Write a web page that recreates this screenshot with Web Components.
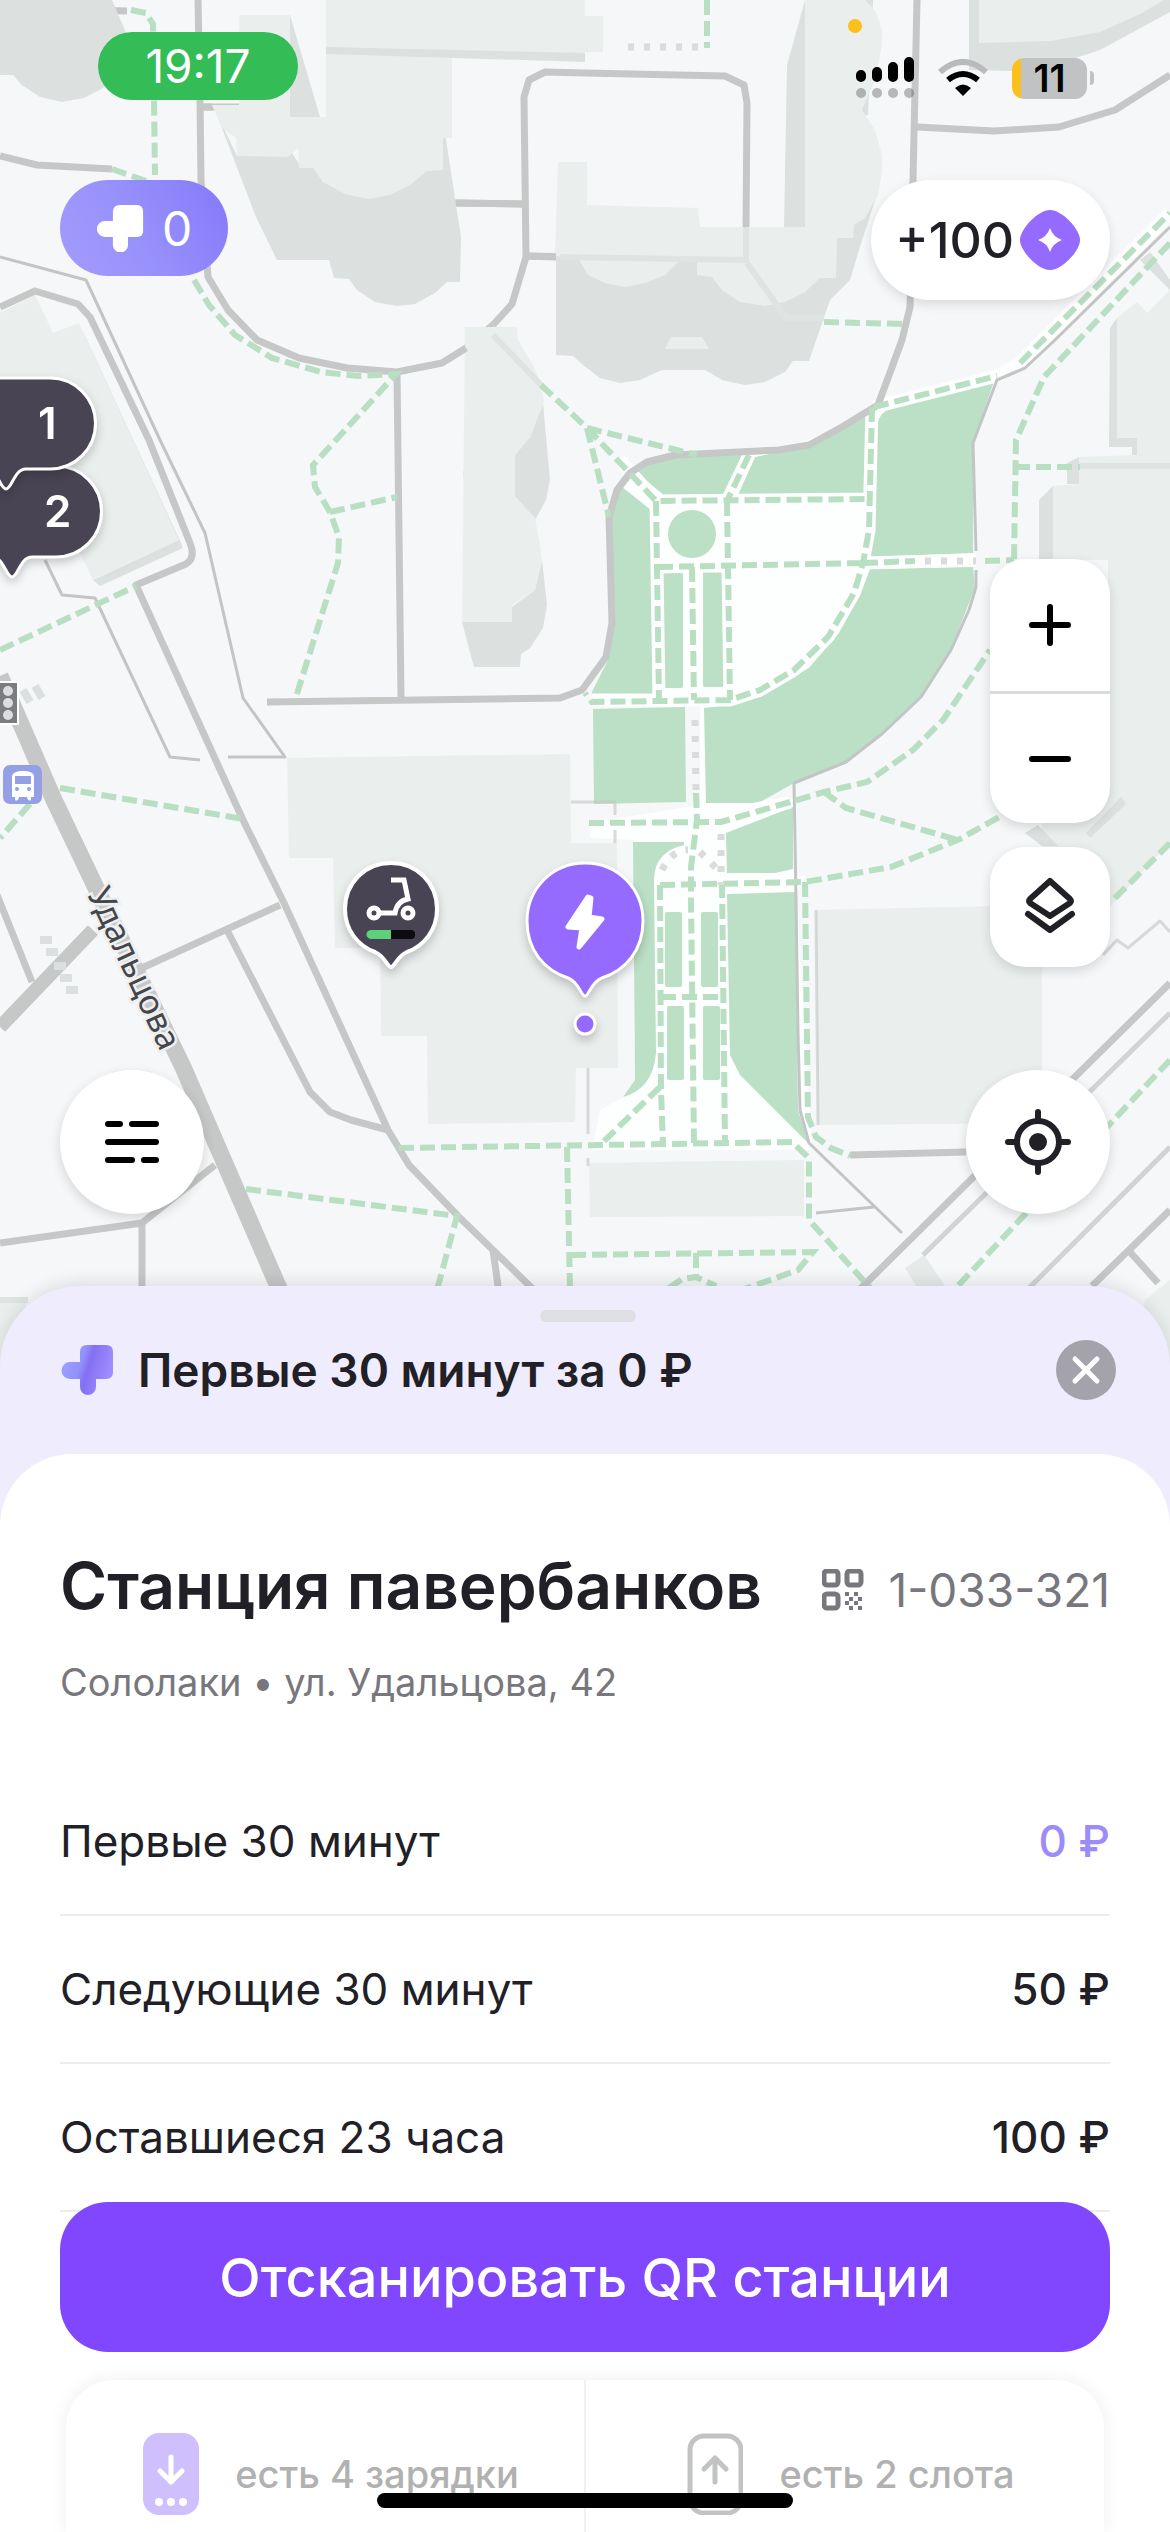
<!DOCTYPE html>
<html lang="ru">
<head>
<meta charset="utf-8">
<meta name="viewport" content="width=device-width">
<title>Станция павербанков</title>
<style>
    body {
        margin: 0;
        font-family: Inter, "Liberation Sans", sans-serif;
        color: #212027;
        background: #ffffff;
    }
</style>
</head>
<body>
<station-app></station-app>

<script>
//Every component goes through this: open shadow root + template
class BaseElement extends HTMLElement {
    render(html) {
        this.attachShadow({ mode: "open" });
        const template = document.createElement("template");
        template.innerHTML = html;
        this.shadowRoot.appendChild(template.content.cloneNode(true));
    }
}

//The drawn city map
class CityMap extends BaseElement {
    constructor() {
        super();
        this.render(`
            <style>
                :host { display: block; overflow: hidden; background: #f5f7f8; }
                svg { display: block; width: 100%; height: 100%; }
                .roof { fill: #eaefee; }
                .shade { fill: #dce1df; }
                .lawn { fill: #bbe0c5; }
                .road { fill: none; stroke: #c6c8c8; stroke-width: 7; stroke-linejoin: round; }
                .wide { stroke-width: 17; }
                .mid { stroke-width: 14; }
                .lane { fill: none; stroke: #d1d4d3; stroke-width: 5; }
                .fence { fill: none; stroke: #c3c5c5; stroke-width: 3; stroke-linejoin: round; }
                .faint { fill: none; stroke: #dfe3e2; stroke-width: 6; }
                .halo { fill: none; stroke: #fefefe; stroke-width: 13; }
                .path { fill: none; stroke: #b9dfc3; stroke-width: 6; stroke-dasharray: 15 6; }
                .steps { fill: none; stroke: #dadcdc; stroke-width: 7; stroke-dasharray: 6 10; }
                text { font: 34px "Noto Sans", sans-serif; fill: #45454c; stroke: #eef0f0; stroke-width: 5; paint-order: stroke; }
            </style>
            <svg viewBox="0 0 1170 1366" preserveAspectRatio="xMidYMin slice" aria-hidden="true">
                <!-- roads under the buildings -->
                <path class="road" d="M12 -4L18 6L30 8L127 11M295 107H201M381 202L522 204M526 256L746 260V227M466 348L493 325"/>

                <!-- building shadows -->
                <g class="shade">
                    <path d="M0 0H112L127 35L120 65L103 88L84 98L62 102L40 97L22 85L13 75H0Z"/>
                    <path d="M290 15L320 117H289Z"/>
                    <path d="M215 110L237 156L290 150L300 165L443 120L461 237L460 282H447L435 293L415 304L397 306L375 302L357 290L349 279L334 278L329 260H277L256 217Z"/>
                    <path d="M805 0L787 65L784 227H806Z"/>
                    <path d="M556 250V355L573 356L583 365L600 378L620 383L640 380L662 370H705L722 380L745 385L765 382L785 372L793 361H809L830 300L850 280L862 240L877 195L860 215L700 240Z"/>
                    <path d="M543 403L550 480L546 500L535 520L515 497V455L530 437ZM463 471H515V482H464ZM542 560L547 605L543 628L530 648L521 654L520 667H474L462 622H512V607L535 590Z"/>
                    <path d="M93 580L179 540L183 548L100 586ZM79 325L87 340L182 545L178 545Z"/>
                    <path d="M969 0V70L1010 71L1060 63L1100 50L1170 12V0Z"/>
                    <path d="M1110 328L1117 318V438H1137V455H1132V447H1109ZM1067 463L1079 457V484H1067ZM1039 500L1053 486V560H1039ZM1108 649H1156V675H1139V660H1108ZM1112 688L1129 677V760L1112 777ZM1140 260L1150 252L1170 280V290Z"/>
                    <path d="M858 0H873L868 115L855 118Z"/>
                    <path d="M905 1268L924 1255L945 1286L925 1300Z" opacity=".6"/>
                </g>

                <!-- roofs -->
                <g class="roof">
                    <path d="M239 15H290V117H326V0H585V60L452 58V138H443V170L427 171L410 185L390 195L368 199L345 194L323 182L313 168H299L298 148L288 157L237 156L236 138L222 128L212 105L239 105Z"/>
                    <path d="M558 162H587V205L698 208L700 227H805V0H865L876 12L882 30V45L875 80L862 110L875 130L882 155V172L878 195L865 218L854 225L853 238H837L836 278H820L805 292L785 302L765 306L740 302L722 290L712 277L697 275V260H680L665 275L645 283L625 287L605 283L588 275L578 258L555 256Z"/>
                    <path d="M665 349L671 337H702L709 349Z"/>
                    <path d="M585 16H603V52H585Z"/>
                    <path d="M0 313L35 295L53 333L79 323L179 540L93 580L45 480H0Z"/>
                    <path d="M465 327H517L518 340L533 365L541 385L544 402L530 437L515 455V496L535 518L540 545L542 560L535 590L512 605V622H462Z"/>
                    <path d="M287 758L570 754L571 843H617L618 1068H576L575 1122L428 1124L427 1036H381L380 948H335L333 858H289Z"/>
                    <path d="M816 910L1042 905V1123L818 1125ZM589 1163L804 1160V1216L590 1217Z"/>
                    <path d="M979 0H1164L1140 14L1100 32L1051 41L979 43Z"/>
                    <path d="M1117 318L1137 302L1147 313L1170 290V438H1117Z"/>
                    <path d="M1053 486L1079 484V457L1137 455V438H1170V842L1088 930L1042 870V660H1108V560H1053Z"/>
                    <path d="M0 1303H26V1366H0ZM1170 1280V1366H1130L1145 1300Z"/>
                </g>
                <path class="shade" d="M326 47L585 53V62L326 54Z"/>
                <path class="shade" d="M1025 833L1038 825L1058 846H1042ZM1086 833L1121 797L1126 804L1090 838Z"/>
                <path class="faint" d="M493 335L541 385M747 263L786 318H824M1080 466H1170M746 227V260L560 257M0 1300H28"/>

                <!-- park -->
                <path fill="#fdfefe" d="M617 490L630 473L655 459L779 450L842 427L878 405L994 378L973 443V565L862 595L760 702L706 802L795 798L796 890L812 1150L592 1150L600 1110L640 1088L634 840L590 838V823L700 805V705H590L655 690Z"/>
                <g class="lawn">
                    <path d="M622 487L651 510L653 697L592 698V692L608 660L613 623L611 520L614 500Z"/>
                    <path d="M637 473L648 460L675 455H744L725 495L665 496Z"/>
                    <path d="M755 457L779 452L809 447L842 430L869 410L865 493L738 495Z"/>
                    <path d="M877 425Q880 411 892 408L994 381L973 443V553L870 557Z"/>
                    <path d="M870 569L973 567L975 587L951 650L921 697L883 733L846 762L794 783L762 801L753 803H706L704 708L736 704L760 697L809 668L839 633L861 593Z"/>
                    <path d="M593 709L685 707L686 802L594 804Z"/>
                    <circle cx="692" cy="534" r="24"/>
                    <rect x="662" y="572" width="21" height="116" rx="2"/>
                    <rect x="703" y="571" width="21" height="116" rx="2"/>
                    <path d="M633 842H684V845Q654 852 654 880L656 1053Q653 1089 623 1097L635 1080V1067Z"/>
                    <path d="M726 833L793 807V869L775 873H727ZM727 894L795 892L797 1033L798 1110L808 1143L740 1075L730 1055Z"/>
                    <rect x="665" y="912" width="17" height="75" rx="2"/>
                    <rect x="701" y="912" width="17" height="75" rx="2"/>
                    <rect x="667" y="1006" width="17" height="74" rx="2"/>
                    <rect x="703" y="1006" width="17" height="74" rx="2"/>
                </g>

                <!-- white edges of the park paths -->
                <path class="halo" d="M874 407L997 376L1020 363L1170 213M872 407L869 530L863 563L854 593L828 637L794 670L760 690L730 700H592M656 501L869 499M656 501L659 700M727 501L730 700M658 567L863 563L976 560M692 567L694 700M749 455L727 501M620 460L656 501M660 885L805 882M721 822L790 802M661 997H723"/>

                <!-- roads -->
                <path class="road" d="M198 0L200 100L201 180L208 277L228 310L257 340L299 358L347 368L397 372L442 363L466 348M493 325L512 304L526 257L524 97L529 80L545 72L585 73L725 76L744 85L747 103L746 227"/>
                <path class="road" d="M201 107H212M456 203L522 204M526 256L556 257M0 156L37 165L112 169"/>
                <path class="road" d="M0 307L35 291L78 304L90 317L149 440L190 543Q196 558 186 564L136 585L243 820L284 903L388 1130L409 1165L459 1217L493 1250L540 1296"/>
                <path class="road" d="M280 905L142 968M228 932L310 1092L330 1112L351 1120L388 1130M493 1250L500 1300"/>
                <path class="road" d="M397 372L401 697M267 702L560 698L582 690L606 657L612 623L609 517L617 490L630 473L647 462L675 455L779 450L809 445L842 427L878 405L902 340L910 307L913 180L917 0"/>
                <path class="road" d="M917 127L994 131L1059 127L1115 110L1170 75M850 1155L966 1152"/>
                <path class="road" d="M850 1299L1170 983M1092 1286L1170 1210M1130 1252L1158 1283M0 1243L142 1223L215 1165M142 1223V1300"/>
                <path class="road" d="M-5 890L32 982"/>
                <path class="road wide" d="M0 676L54 800L97 890L183 1067L284 1300"/>
                <path class="road mid" d="M93 930L0 1027"/>
                <path class="lane" d="M923 1255L1170 1013M1027 1290L1170 1147"/>
                <path class="fence" d="M0 257L86 280L160 440L205 533L243 698L285 757H228M45 560L62 595L95 598L170 757L200 760"/>
                <path class="fence" d="M794 783L796 900L798 1033L800 1110L809 1143L902 1233M816 1213L874 1207M794 783L846 762L883 733L921 697L951 650L969 610L976 587V570M976 551L973 443L997 380L1025 368L1055 340L1170 227"/>
                <path class="fence" d="M571 802H615V815M615 830V843M588 1068V1134M588 1158V1166M1103 955L1117 940L1128 948L1160 921L1170 932M816 910L818 1125" opacity=".6"/>
                <path d="M40 940H52M46 952H58M54 966H66M60 978H72M66 990H78M23 690L30 702M35 686L42 698" stroke="#dcdfdf" stroke-width="8"/>

                <!-- footpaths -->
                <path class="path" d="M131 10L146 13L153 24L155 175M112 169L146 181M194 280L209 305L235 335L272 358L321 372L358 376L396 374L336 440L313 465L315 487L330 512L339 537L338 563L317 630L295 700M330 512L397 497M541 385L587 428"/>
                <path class="path" d="M0 650L136 586M60 788L243 819M30 804L0 838M246 1189L457 1216L437 1290M399 1148L600 1145L792 1142L809 1158V1220L872 1290M567 1147L570 1290M571 1255L813 1252L798 1270L742 1290M696 1253V1277M669 1288L682 1279L696 1277L716 1286"/>
                <path class="path" d="M587 428L697 455M587 428L656 501L869 499M587 428L609 517M656 501L659 700M727 501L730 700M749 455L727 501M658 567L863 563M872 407L869 530L863 563L854 593L828 637L794 670L760 690L730 700L592 702L585 693M692 567L694 700M863 563L915 561M985 561L1014 560"/>
                <path class="path" d="M874 407L997 376M1020 363L1170 213M1170 243L1044 377L1016 440L1014 560M1015 467H1080M707 0V48M824 322L904 324"/>
                <path class="path" d="M589 823L721 822L790 802L824 792L867 782L913 750L943 720L990 650M824 792L846 808L958 840M660 885L805 882L891 867L960 839L999 817M805 882L808 1117L816 1137L831 1148L850 1156"/>
                <path class="path" d="M696 793L697 820L691 867V900L694 1143M660 885L661 1090L663 1145M722 883L725 1143M661 997H723M660 1087L600 1145M1170 843L1111 902M1170 1060L954 1290"/>
                <path class="steps" d="M695 720L696 793M628 47H707M925 561H976M721 834V885M662 870Q672 850 688 850M700 852L720 872"/>

                <text transform="translate(87 894) rotate(65)">Удальцова</text>

                <!-- traffic light and bus stop -->
                <rect x="-14" y="682" width="32" height="42" fill="#7b7c80" stroke="#fff" stroke-width="2"/>
                <g fill="#dcdde0"><circle cx="8" cy="691" r="5"/><circle cx="8" cy="703" r="5"/><circle cx="8" cy="715" r="5"/></g>
                <rect x="3" y="765" width="39" height="39" rx="7" fill="#949fe6"/>
                <path fill="#fff" fill-rule="evenodd" d="M12 776Q13 771 23 771Q33 771 34 776V797H31V800Q28 802 27 797H19Q18 802 15 800V797H12ZM15 776V784H31V776ZM17 787A2 2 0 1 0 17 791A2 2 0 1 0 17 787M29 787A2 2 0 1 0 29 791A2 2 0 1 0 29 787"/>
            </svg>
        `);
    }
}

//Phone status bar
class StatusBar extends BaseElement {
    constructor() {
        super();
        this.render(`
            <style>
                :host { display: flex; justify-content: space-between; align-items: center; padding: 0 76px 0 98px; height: 132px; }
                .time { width: 200px; height: 68px; border-radius: 34px; background: #34bd57; color: #fff; font-size: 46px; line-height: 68px; text-align: center; }
                .right { display: flex; align-items: center; gap: 24px; padding-top: 24px; position: relative; }
                .dot { position: absolute; top: -14px; left: -8px; width: 14px; height: 14px; border-radius: 7px; background: #fdbf1c; }
                .battery { width: 75px; height: 41px; border-radius: 12px; background: linear-gradient(90deg, #fdbf1c 9px, #c1c2c3 9px); color: #000; font-weight: 600; font-size: 38px; line-height: 41px; text-align: center; }
                .nub { width: 4px; height: 14px; margin-left: -21px; border-radius: 0 4px 4px 0; background: #c1c2c3; }
            </style>
            <div class="time">19:17</div>
            <div class="right">
                <span class="dot"></span>
                <svg width="58" height="42" viewBox="0 0 58 42">
                    <path d="M5 18V20M21 15V20M37 10V20M53 5V20" stroke="#000" stroke-width="10" stroke-linecap="round"/>
                    <path d="M5 36H5.1M21 36H21.1M37 36H37.1M53 36H53.1" stroke="#000" opacity=".25" stroke-width="10" stroke-linecap="round"/>
                </svg>
                <svg width="50" height="38" viewBox="0 0 50 38">
                    <path d="M2 13Q25 -7 48 13" fill="none" stroke="#b9babb" stroke-width="6"/>
                    <path d="M10 21Q25 9 40 21" fill="none" stroke="#000" stroke-width="6"/>
                    <path d="M25 37L17 29Q25 22 33 29Z"/>
                </svg>
                <div class="battery">11</div>
                <span class="nub"></span>
            </div>
        `);
    }
}

//Rounded pill button in the top corners. kind="points" is the purple one
class InfoPill extends BaseElement {
    constructor() {
        super();
        this.render(`
            <style>
                :host { display: block; }
                button { display: flex; align-items: center; border: 0; margin: 0; font: inherit; color: #212027; }
                button { height: 120px; padding: 0 30px 0 24px; gap: 6px; border-radius: 60px; background: #fff; font-size: 50px; font-weight: 500; box-shadow: 0 4px 12px rgba(0, 0, 0, .12); }
                :host([kind="points"]) button { height: 96px; padding: 0 36px; gap: 18px; border-radius: 48px; color: #fff; font-size: 48px; font-weight: 400; background: linear-gradient(60deg, #a39cfb, #9791fc 45%, #8579f9); box-shadow: none; }
            </style>
            <button type="button"><slot></slot></button>
        `);
    }
}

//White control on the map, shape="round" for the big circles
class MapButton extends BaseElement {
    constructor() {
        super();
        this.render(`
            <style>
                :host { display: block; }
                button { display: flex; align-items: center; justify-content: center; width: 120px; height: 120px; padding: 0; border: 0; border-radius: 36px; background: #fff; box-shadow: 0 4px 12px rgba(0, 0, 0, .14); }
                :host([shape="round"]) button { width: 144px; height: 144px; border-radius: 72px; }
            </style>
            <button type="button"><slot></slot></button>
        `);
        this.shadowRoot.querySelector("button").setAttribute("aria-label", this.getAttribute("label") || "");
    }
}

class ZoomControl extends BaseElement {
    constructor() {
        super();
        this.render(`
            <style>
                :host { display: flex; flex-direction: column; border-radius: 36px; background: #fff; box-shadow: 0 4px 12px rgba(0, 0, 0, .14); }
                button { display: flex; align-items: center; justify-content: center; width: 120px; height: 132px; padding: 0; border: 0; background: none; }
                button + button { border-top: 3px solid #d9dadb; }
                path { stroke: #000; stroke-width: 6; stroke-linecap: round; }
            </style>
            <button type="button" aria-label="Приблизить"><svg width="48" height="48"><path d="M6 24H42M24 6V42"/></svg></button>
            <button type="button" aria-label="Отдалить"><svg width="48" height="48"><path d="M6 24H42"/></svg></button>
        `);
    }
}

//Bubbles for groups of scooters at the left edge
class ClusterPin extends BaseElement {
    constructor() {
        super();
        this.render(`
            <style>
                :host { display: block; position: absolute; filter: drop-shadow(0 4px 5px rgba(0, 0, 0, .2)); }
                button { position: relative; display: block; width: 170px; height: 114px; padding: 0 0 20px 108px; border: 0; background: none; color: #fff; font: 600 44px Inter, sans-serif; text-align: left; }
                svg { position: absolute; left: 0; top: 0; }
                span { position: relative; }
            </style>
            <button type="button">
                <svg width="170" height="116" viewBox="0 0 170 116"><path d="M48 2H120A45 45 0 0 1 120 93H96C84 93 82 113 76 113C70 113 68 93 56 93H48A45 45 0 0 1 48 2Z" fill="#494453" stroke="#fff" stroke-width="3"/></svg>
                <span><slot></slot></span>
            </button>
        `);
    }
}

//Map markers: a drop with a picture inside
class MapPin extends BaseElement {
    constructor() {
        super();
        this.render(`
            <style>
                :host { display: block; position: absolute; filter: drop-shadow(0 5px 5px rgba(0, 0, 0, .2)); }
                button { display: block; padding: 0; border: 0; background: none; }
            </style>
            <button type="button"><slot></slot></button>
        `);
    }
}

class PromoBar extends BaseElement {
    constructor() {
        super();
        this.render(`
            <style>
                :host { display: flex; flex-direction: column; align-items: center; gap: 18px; padding: 24px 54px 54px 60px; }
                .handle { width: 96px; height: 12px; border-radius: 6px; background: #dfe0e3; }
                .row { display: flex; align-items: center; gap: 24px; align-self: stretch; }
                h2 { flex: 1; margin: 0; font-size: 46px; line-height: 60px; font-weight: 600; }
                button { width: 60px; height: 60px; padding: 0; border: 0; border-radius: 30px; background: #a4a2ab; }
                svg { display: block; }
            </style>
            <div class="handle"></div>
            <div class="row">
                <svg width="54" height="54" viewBox="0 0 54 54">
                    <defs><linearGradient id="g" x2="1" y2=".3"><stop stop-color="#9fa5ff"/><stop offset=".45" stop-color="#9191fb"/><stop offset=".6" stop-color="#8270f0"/><stop offset="1" stop-color="#a08cff"/></linearGradient></defs>
                    <path fill="url(#g)" d="M20 9Q20 2 27 2H46Q53 2 53 9V29Q53 36 46 36H36V44A8 8 0 0 1 20 44V36H10A8 8 0 0 1 10 19H20Z"/>
                </svg>
                <h2><slot></slot></h2>
                <button type="button" aria-label="Закрыть"><svg width="60" height="60"><path d="M19 19L41 41M41 19L19 41" stroke="#fff" stroke-width="5" stroke-linecap="round"/></svg></button>
            </div>
        `);
    }
}

class StationHeader extends BaseElement {
    constructor() {
        super();
        this.render(`
            <style>
                :host { display: block; }
                .row { display: flex; align-items: flex-end; justify-content: space-between; }
                h1 { margin: 0; font-size: 64px; line-height: 80px; font-weight: 600; white-space: nowrap; }
                .code { display: flex; align-items: center; gap: 24px; color: #77777d; font-size: 46px; line-height: 72px; white-space: nowrap; }
                p { margin: 28px 0 0; color: #77777d; font-size: 38px; line-height: 56px; }
            </style>
            <div class="row">
                <h1><slot name="title"></slot></h1>
                <div class="code">
                    <svg width="42" height="42" viewBox="0 0 42 42">
                        <g fill="none" stroke="#77777d" stroke-width="5"><rect x="2" y="2" width="14" height="14" rx="3"/><rect x="25" y="2" width="14" height="14" rx="3"/><rect x="2" y="25" width="14" height="14" rx="3"/></g>
                        <path fill="none" stroke="#77777d" stroke-width="4" stroke-dasharray="4 5" d="M23 25H41M23 34H41M27 30H41M27 39H41"/>
                    </svg>
                    <slot name="code"></slot>
                </div>
            </div>
            <p><slot name="address"></slot></p>
        `);
    }
}

class TariffTable extends BaseElement {
    constructor() {
        super();
        const tariffs = [
            ["Первые 30 минут", "0 ₽", "free"],
            ["Следующие 30 минут", "50 ₽", ""],
            ["Оставшиеся 23 часа", "100 ₽", ""]
        ];
        const rows = tariffs.map(([name, price, type]) =>
            `<tr><th scope="row">${name}</th><td class="${type}">${price}</td></tr>`).join("");
        this.render(`
            <style>
                :host { display: block; }
                table { width: 100%; border-collapse: collapse; }
                th, td { height: 146px; padding: 0; border-bottom: 2px solid #ededee; font-size: 44px; line-height: 60px; }
                th { font-weight: 400; text-align: left; }
                td { font-weight: 500; text-align: right; }
                .free { color: #9c8cfa; }
            </style>
            <table><tbody>${rows}</tbody></table>
        `);
    }
}

class SlotsCard extends BaseElement {
    constructor() {
        super();
        this.render(`
            <style>
                :host { display: flex; border-radius: 48px 48px 0 0; background: #fff; color: #b1b1b2; font-size: 38px; font-weight: 500; line-height: 56px; box-shadow: 0 0 18px rgba(40, 40, 60, .08); }
                div { flex: 1; display: flex; align-items: center; justify-content: center; gap: 36px; padding: 53px 0 17px 12px; }
                div + div { border-left: 2px solid #f1f1f2; }
            </style>
            <div>
                <svg width="56" height="82" viewBox="0 0 56 82">
                    <rect width="56" height="82" rx="16" fill="#cfc0fd"/>
                    <path d="M28 24V48M17 38L28 49L39 38" fill="none" stroke="#fff" stroke-width="5" stroke-linecap="round" stroke-linejoin="round"/>
                    <g fill="#fff"><circle cx="16" cy="69" r="4"/><circle cx="28" cy="69" r="4"/><circle cx="40" cy="69" r="4"/></g>
                </svg>
                <slot name="charged"></slot>
            </div>
            <div>
                <svg width="56" height="82" viewBox="0 0 56 82" fill="none" stroke="#c2c3c3" stroke-width="5">
                    <rect x="3" y="3" width="51" height="77" rx="14"/>
                    <path d="M28 49V25M17 36L28 25L39 36" stroke-linecap="round" stroke-linejoin="round"/>
                </svg>
                <slot name="free"></slot>
            </div>
        `);
    }
}

class BottomSheet extends BaseElement {
    constructor() {
        super();
        this.render(`
            <style>
                :host { display: block; position: relative; border-radius: 80px 80px 0 0; background: #efecfd; box-shadow: 0 -4px 16px rgba(0, 0, 0, .1); }
                .body { display: flex; flex-direction: column; padding: 92px 60px 0; border-radius: 72px 72px 0 0; background: #fff; }
                ::slotted(tariff-table) { margin-top: 58px; }
                ::slotted(slots-card) { margin: 168px 6px 0; }
            </style>
            <slot name="promo"></slot>
            <div class="body"><slot></slot></div>
        `);
    }
}

//Main action, stays over the scrolled sheet
class ScanButton extends BaseElement {
    constructor() {
        super();
        this.render(`
            <style>
                :host { display: block; position: fixed; left: 60px; right: 60px; bottom: 180px; }
                button { display: block; width: 100%; height: 150px; padding: 0; border: 0; border-radius: 48px; background: #8147ff; color: #fff; font: 500 54px Inter, sans-serif; }
            </style>
            <button type="button"><slot></slot></button>
        `);
    }
}

class StationApp extends BaseElement {
    constructor() {
        super();
        this.render(`
            <style>
                :host { display: flex; flex-direction: column; min-height: 100vh; }
                .map { flex: 1; position: relative; display: flex; flex-direction: column; margin-bottom: -80px; overflow: hidden; }
                city-map { position: absolute; inset: 0; }
                .top { display: flex; justify-content: space-between; align-items: flex-start; padding: 48px 60px 0; position: relative; }
                .controls { display: flex; justify-content: space-between; align-items: flex-end; margin-top: auto; padding: 0 60px 152px; position: relative; }
                .column { display: flex; flex-direction: column; align-items: flex-end; gap: 24px; }
                .locate { margin-top: 79px; }
                status-bar { position: relative; }
                svg { display: block; }
                .home { position: fixed; left: 50%; bottom: 24px; width: 416px; height: 15px; margin-left: -208px; border-radius: 8px; background: #000; }
            </style>
            <main class="map">
                <city-map></city-map>
                <cluster-pin style="left: -64px; top: 464px">2</cluster-pin>
                <cluster-pin style="left: -70px; top: 376px">1</cluster-pin>
                <map-pin style="left: 341px; top: 860px">
                    <svg width="100" height="112" viewBox="0 0 100 112">
                        <path d="M50 3C76 3 96 23 96 49C96 70 83 86 66 92C56 96 54 107 50 107C46 107 44 96 34 92C17 86 4 70 4 49C4 23 24 3 50 3Z" fill="#494453" stroke="#fff" stroke-width="4"/>
                        <g fill="none" stroke="#fff" stroke-width="5"><circle cx="33" cy="53" r="5"/><circle cx="67" cy="53" r="5"/><path d="M39 53H54Q56 41 67 39L63 20H50"/></g>
                        <rect x="26" y="70" width="48" height="9" rx="4" fill="#0c0b0f"/>
                        <path d="M50 70H30A4 4 0 0 0 30 79H50Z" fill="#5dd07c"/>
                    </svg>
                </map-pin>
                <map-pin style="left: 525px; top: 860px">
                    <svg width="120" height="180" viewBox="0 0 120 180">
                        <path d="M60 3C93 3 118 29 118 61C118 90 101 110 77 118C66 122 64 136 60 136C56 136 54 122 43 118C19 110 2 90 2 61C2 29 27 3 60 3Z" fill="#956aff" stroke="#fff" stroke-width="3"/>
                        <path d="M63 37L43 67L57 68L54 87L77 59L64 57L66 38Z" fill="#fff" stroke="#fff" stroke-width="5" stroke-linejoin="round"/>
                        <circle cx="60" cy="164" r="10" fill="#956aff" stroke="#fff" stroke-width="3"/>
                    </svg>
                </map-pin>
                <status-bar></status-bar>
                <div class="top">
                    <info-pill kind="points">
                        <svg width="48" height="48" viewBox="0 0 54 54"><path fill="#fff" d="M19 9Q19 1 27 1H46Q53 1 53 9V30Q53 37 46 37H36V46A8 8 0 0 1 19 46V37H10A8 8 0 0 1 10 19H19Z"/></svg>
                        <span>0</span>
                    </info-pill>
                    <info-pill>
                        <span>+100</span>
                        <svg width="60" height="60" viewBox="0 0 60 60">
                            <path d="M30 0C42 0 60 19 60 30S42 60 30 60S0 41 0 30S18 0 30 0Z" fill="#956aff"/>
                            <path d="M30 18Q33 27 42 30Q33 33 30 42Q27 33 18 30Q27 27 30 18Z" fill="#fff"/>
                        </svg>
                    </info-pill>
                </div>
                <div class="controls">
                    <map-button shape="round" label="Меню">
                        <svg width="60" height="48" viewBox="0 0 60 48"><path d="M6 6H18M30 6H54M6 24H54M6 42H30M42 42H54" stroke="#000" stroke-width="6" stroke-linecap="round"/></svg>
                    </map-button>
                    <div class="column">
                        <zoom-control></zoom-control>
                        <map-button label="Слои">
                            <svg width="60" height="60" viewBox="0 3 60 60" fill="none" stroke="#212027" stroke-width="6" stroke-linecap="round" stroke-linejoin="round"><path d="M30 7L50 25Q52 27 50 29L30 42L10 29Q8 27 10 25Z"/><path d="M8 40L30 56L52 40"/></svg>
                        </map-button>
                        <map-button class="locate" shape="round" label="Моё местоположение">
                            <svg width="72" height="72" viewBox="0 0 72 72" fill="none" stroke="#212027" stroke-width="6" stroke-linecap="round"><circle cx="36" cy="36" r="21"/><circle cx="36" cy="36" r="9" fill="#212027" stroke="none"/><path d="M36 6V14M36 58V66M6 36H14M58 36H66"/></svg>
                        </map-button>
                    </div>
                </div>
            </main>
            <bottom-sheet>
                <promo-bar slot="promo">Первые 30 минут за 0 ₽</promo-bar>
                <station-header>
                    <span slot="title">Станция павербанков</span>
                    <span slot="code">1-033-321</span>
                    <span slot="address">Сололаки • ул. Удальцова, 42</span>
                </station-header>
                <tariff-table></tariff-table>
                <slots-card>
                    <span slot="charged">есть 4 зарядки</span>
                    <span slot="free">есть 2 слота</span>
                </slots-card>
            </bottom-sheet>
            <scan-button>Отсканировать QR станции</scan-button>
            <div class="home"></div>
        `);
    }
}

//Register the custom elements with the browser
customElements.define("city-map", CityMap);
customElements.define("status-bar", StatusBar);
customElements.define("info-pill", InfoPill);
customElements.define("map-button", MapButton);
customElements.define("zoom-control", ZoomControl);
customElements.define("cluster-pin", ClusterPin);
customElements.define("map-pin", MapPin);
customElements.define("promo-bar", PromoBar);
customElements.define("station-header", StationHeader);
customElements.define("tariff-table", TariffTable);
customElements.define("slots-card", SlotsCard);
customElements.define("bottom-sheet", BottomSheet);
customElements.define("scan-button", ScanButton);
customElements.define("station-app", StationApp);
</script>
</body>
</html>
